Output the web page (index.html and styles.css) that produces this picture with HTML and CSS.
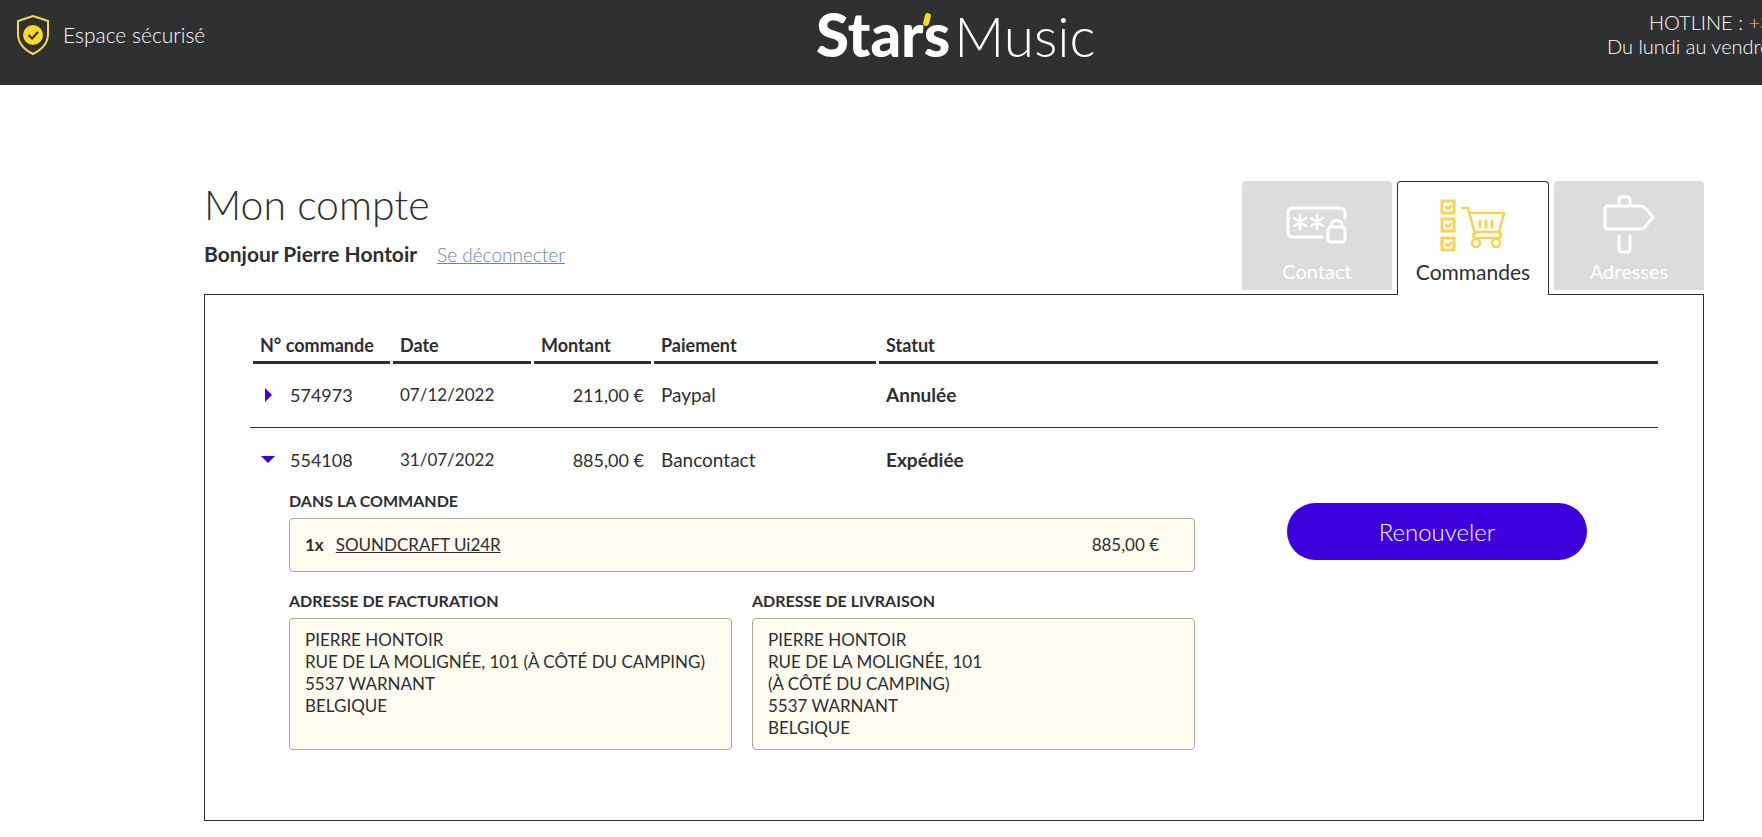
FILE: index.html
```html
<!DOCTYPE html>
<html lang="fr">
<head>
    <meta charset="UTF-8">
    <meta name="viewport" content="width=device-width, initial-scale=1.0">
    <title>Mon compte - Star's Music</title>
    <link rel="stylesheet" href="styles.css">
</head>
<body>

    <header class="header">
        <div class="secure">
            <svg class="shield" viewBox="0 0 34 42" fill="none">
                <path d="M17 2 L32 7 V20 C32 30 25 36 17 40 C9 36 2 30 2 20 V7 Z" stroke="#f8d848" stroke-width="2"/>
                <circle cx="17" cy="21" r="10" fill="#fbd92c"/>
                <path d="M12.500 21 L16 24.500 L22 18" stroke="#2e3031" stroke-width="2"/>
            </svg>
            <span>Espace sécurisé</span>
        </div>
        <a href="#" class="logo"><span class="logo-bold">Star<i class="logo-tick"></i>s</span><span class="logo-light">Music</span></a>
        <div class="hotline">
            <p class="hotline-phone">HOTLINE : <a href="#">+32</a></p>
            <p>Du lundi au vendredi</p>
        </div>
    </header>

    <main class="account">
        <div class="account-top">
            <div>
                <h1>Mon compte</h1>
                <p class="hello"><strong>Bonjour Pierre Hontoir</strong><a href="#">Se déconnecter</a></p>
            </div>
            <nav class="tabs">
                <a href="#" class="tab">
                    <svg viewBox="0 0 64 62" fill="none" stroke="#fff" stroke-width="3" stroke-linecap="round" stroke-linejoin="round">
                        <path d="M37 43 H8 Q3 43 3 38 V19 Q3 14 8 14 H55 Q60 14 60 19 V24"/>
                        <path d="M15 21 V35 M9 24 L21 32 M21 24 L9 32 M32 21 V35 M26 24 L38 32 M38 24 L26 32" stroke-width="2.500"/>
                        <rect x="43" y="33" width="17" height="15" rx="3"/>
                        <path d="M46 33 V31 C46 25 57 25 57 31 V33"/>
                    </svg>
                    <span>Contact</span>
                </a>
                <a href="#" class="tab active">
                    <svg viewBox="0 0 66 62" fill="none" stroke="#f5d452" stroke-width="2.500" stroke-linecap="round" stroke-linejoin="round">
                        <path d="M2 7 H14 V19 H2 Z M2 25 H14 V37 H2 Z M2 44 H14 V56 H2 Z" stroke-width="3" stroke-linejoin="miter"/>
                        <path d="M6 13 L8 15 L11 12 M6 31 L8 33 L11 30 M6 50 L8 52 L11 49"/>
                        <path d="M22 14 H28 L35 40"/>
                        <path d="M30 19 H64 L59 38 H34 M35 39 C32 40 33 45 36 44 H58 C62 44 62 39 58 38"/>
                        <path d="M40 27 V33 M46 27 V33 M52 27 V33" stroke-width="3"/>
                        <circle cx="36" cy="49" r="4"/>
                        <circle cx="56" cy="49" r="4"/>
                    </svg>
                    <span>Commandes</span>
                </a>
                <a href="#" class="tab">
                    <svg viewBox="0 0 54 62" fill="none" stroke="#fff" stroke-width="3" stroke-linecap="round" stroke-linejoin="round">
                        <path d="M6 12 H38 Q41 12 43 14 L51 23 L43 33 Q41 35 38 35 H6 Q3 35 3 32 V15 Q3 12 6 12 Z"/>
                        <path d="M17 11 V6 Q17 3 20 3 H25 Q28 3 28 6 V11"/>
                        <path d="M17 42 V55 Q17 58 20 58 H25 Q28 58 28 55 V42"/>
                    </svg>
                    <span>Adresses</span>
                </a>
            </nav>
        </div>

        <section class="panel">
            <table class="orders">
                <thead>
                    <tr>
                        <th class="col-number"><span>N° commande</span></th>
                        <th class="col-date"><span>Date</span></th>
                        <th class="col-amount"><span>Montant</span></th>
                        <th class="col-payment"><span>Paiement</span></th>
                        <th><span>Statut</span></th>
                    </tr>
                </thead>
                <tbody>
                    <tr class="closed">
                        <td><div class="number"><button type="button" class="toggle" aria-label="Ouvrir"><svg viewBox="0 0 14 14"><path d="M4 0 L11 7 L4 14 Z"/></svg></button>574973</div></td>
                        <td class="date">07/12/2022</td>
                        <td class="amount">211,00 €</td>
                        <td>Paypal</td>
                        <td class="status">Annulée</td>
                    </tr>
                    <tr>
                        <td><div class="number"><button type="button" class="toggle" aria-label="Fermer"><svg viewBox="0 0 14 14"><path d="M0 3 H14 L7 10 Z"/></svg></button>554108</div></td>
                        <td class="date">31/07/2022</td>
                        <td class="amount">885,00 €</td>
                        <td>Bancontact</td>
                        <td class="status">Expédiée</td>
                    </tr>
                    <tr>
                        <td colspan="5" class="detail-cell">
                            <div class="detail">
                                <div class="detail-info">
                                    <h2>DANS LA COMMANDE</h2>
                                    <div class="box product">
                                        <b>1x</b>
                                        <a href="#">SOUNDCRAFT Ui24R</a>
                                        <span class="price">885,00 €</span>
                                    </div>
                                    <div class="addresses">
                                        <div class="address">
                                            <h2>ADRESSE DE FACTURATION</h2>
                                            <address class="box">
                                                PIERRE HONTOIR<br>
                                                RUE DE LA MOLIGNÉE, 101 (À CÔTÉ DU CAMPING)<br>
                                                5537 WARNANT<br>
                                                BELGIQUE
                                            </address>
                                        </div>
                                        <div class="address">
                                            <h2>ADRESSE DE LIVRAISON</h2>
                                            <address class="box">
                                                PIERRE HONTOIR<br>
                                                RUE DE LA MOLIGNÉE, 101<br>
                                                (À CÔTÉ DU CAMPING)<br>
                                                5537 WARNANT<br>
                                                BELGIQUE
                                            </address>
                                        </div>
                                    </div>
                                </div>
                                <div class="detail-action">
                                    <button type="button" class="renew">Renouveler</button>
                                </div>
                            </div>
                        </td>
                    </tr>
                </tbody>
            </table>
        </section>
    </main>

</body>
</html>
```
FILE: styles.css
```css
* {
    box-sizing: border-box;
}
body {
    margin: 0;
    background-color: #fff;
    color: #2e2e30;
    font-family: Lato, "Liberation Sans", sans-serif;
    font-size: 18px;
    line-height: 22px;
}
h1, h2, p {
    margin: 0;
}

/* Header */
.header {
    display: grid;
    grid-template-columns: 800px 1fr 155px;
    height: 85px;
    padding-left: 16px;
    background-color: #2e3031;
    color: #fff;
    overflow: hidden;
}
.secure {
    display: flex;
    align-items: center;
    gap: 13px;
    height: 70px;
    font-size: 21px;
    font-weight: 300;
}
.shield {
    width: 34px;
    height: 42px;
}
.logo {
    display: flex;
    align-items: baseline;
    gap: 4px;
    height: 70px;
    color: #fff;
    font-size: 60px;
    line-height: 68px;
    text-decoration: none;
}
.logo-bold {
    font-weight: 900;
}
.logo-light {
    font-size: 55px;
    font-weight: 300;
}
.logo-tick {
    position: absolute;
    width: 6px;
    height: 13px;
    margin-top: 13px;
    border-radius: 3px;
    background-color: #fbd916;
    transform: rotate(14deg);
}
.hotline {
    padding-top: 10px;
    font-size: 20px;
    font-weight: 300;
    line-height: 24px;
    white-space: nowrap;
    overflow: hidden;
}
.hotline-phone {
    padding-left: 42px;
}
.hotline a {
    color: #fbd95a;
    text-decoration: none;
}

/* Account */
.account {
    padding: 96px 58px 16px 204px;
}
.account-top {
    display: flex;
    justify-content: space-between;
    height: 113px;
}
h1 {
    font-size: 41px;
    font-weight: 300;
    line-height: 48px;
}
.hello {
    display: flex;
    align-items: baseline;
    gap: 20px;
    margin-top: 12px;
    font-size: 21px;
    line-height: 26px;
}
.hello a {
    color: #6c84ae;
    font-size: 19px;
    font-weight: 300;
}
.tabs {
    display: flex;
    align-items: flex-start;
    gap: 5px;
}
.tab {
    display: flex;
    flex-direction: column;
    align-items: center;
    justify-content: space-between;
    width: 150px;
    height: 109px;
    padding: 13px 0 7px;
    border-radius: 4px 4px 0 0;
    background-color: #dcdcdc;
    color: #fff;
    font-size: 20px;
    line-height: 24px;
    text-decoration: none;
}
.tab svg {
    height: 62px;
}
.tab.active {
    position: relative;
    width: 152px;
    height: 114px;
    padding: 12px 0 11px;
    border: 1px solid #2e2e30;
    border-bottom: none;
    background-color: #fff;
    color: #2e2e30;
    font-size: 21px;
}

/* Orders */
.panel {
    padding: 39px 45px 70px;
    border: 1px solid #2e2e30;
}
.orders {
    width: 100%;
    border-collapse: collapse;
    table-layout: fixed;
}
.col-number {
    width: 140px;
}
.col-date {
    width: 141px;
}
.col-amount {
    width: 120px;
}
.col-payment {
    width: 225px;
}
.orders th {
    padding: 0 0 0 3px;
    font-size: 18px;
    text-align: left;
}
.orders th span {
    display: block;
    padding: 0 0 5px 7px;
    border-bottom: 3px solid #2e2e30;
}
.orders td {
    padding: 21px 0 20px 10px;
    font-size: 19px;
}
.orders .closed {
    border-bottom: 1px solid #2e2e30;
}
.orders .closed td {
    padding-top: 20px;
    padding-bottom: 21px;
}
.number {
    display: flex;
    align-items: center;
    gap: 15px;
    padding-left: 1px;
    font-size: 18px;
}
.toggle {
    width: 14px;
    height: 14px;
    padding: 0;
    border: none;
    background: none;
    cursor: pointer;
}
.toggle svg {
    display: block;
    width: 14px;
    height: 14px;
    fill: #3c00d8;
}
.orders .date {
    font-size: 17px;
}
.orders .amount {
    padding-right: 7px;
    font-size: 18px;
    text-align: right;
}
.status {
    font-weight: 700;
}

/* Order detail */
.orders .detail-cell {
    padding: 0 0 0 39px;
}
.detail {
    display: flex;
}
.detail-info {
    flex: 1;
    max-width: 906px;
}
h2 {
    margin-bottom: 7px;
    font-size: 16px;
    line-height: 20px;
}
.box {
    padding: 10px 15px;
    border: 1px solid #a8a8a4;
    border-radius: 4px;
    background-color: #fffbef;
    font-size: 17px;
    font-style: normal;
}
.product {
    display: flex;
    gap: 12px;
    padding: 15px 35px 15px 15px;
}
.product a {
    color: #2e2e30;
}
.price {
    margin-left: auto;
}
.addresses {
    display: flex;
    gap: 20px;
    margin-top: 19px;
}
.address {
    display: flex;
    flex: 1;
    flex-direction: column;
}
.address .box {
    flex: 1;
}
.detail-action {
    padding: 12px 0 0 92px;
}
.renew {
    width: 300px;
    height: 57px;
    border: none;
    border-radius: 29px;
    background-color: #3c00dc;
    color: #fff;
    font-family: inherit;
    font-size: 24px;
    font-weight: 300;
    cursor: pointer;
}
```
